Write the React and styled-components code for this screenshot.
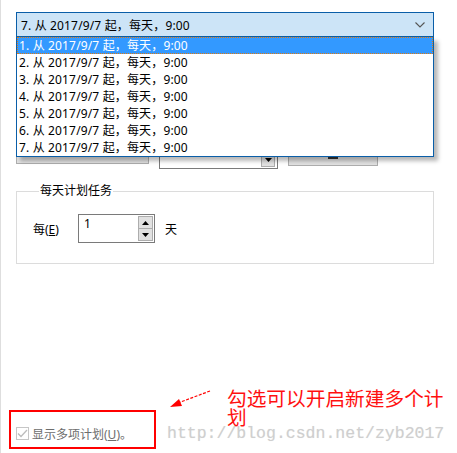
import React from "react";
import styled, { createGlobalStyle } from "styled-components";

const Global = createGlobalStyle`
  html, body { margin: 0; padding: 0; background: #fff; }
  body { font-family: "Noto Sans", "Noto Sans CJK SC", sans-serif; font-size: 12px; color: #000; }
`;

const UI = `"Noto Sans", "Noto Sans CJK SC", sans-serif`;

const Page = styled.div`
  position: relative;
  width: 456px;
  height: 453px;
  border-left: 1px solid #dedede;
  padding-left: 15px;
  box-sizing: border-box;
  display: flex;
  flex-direction: column;
  overflow: hidden;
  font-family: ${UI};
  font-size: 12px;
`;

const ComboWrap = styled.div`
  position: relative;
  margin-top: 12px;
  width: 418px;
  z-index: 5;
`;

const Combo = styled.div`
  height: 25px;
  box-sizing: border-box;
  border: 1px solid #0a5ea8;
  background: #cce4f7;
  display: flex;
  align-items: center;
  justify-content: space-between;
  padding: 0 8px 0 4px;
  color: #000;
  letter-spacing: 0.15px;
`;

const List = styled.ul`
  position: absolute;
  top: 100%;
  left: 0;
  width: 418px;
  margin: 0;
  padding: 0;
  list-style: none;
  box-sizing: border-box;
  border: 1px solid #0a5ea8;
  border-top: none;
  background: #fff;
  box-shadow: 4px 4px 4px rgba(0, 0, 0, 0.28);
`;

const Item = styled.li`
  height: 17px;
  line-height: 17px;
  padding-left: 2px;
  box-sizing: border-box;
  white-space: nowrap;
  letter-spacing: 0.15px;
  background: ${(p) => (p.$active ? "#3399ff" : "#fff")};
  color: ${(p) => (p.$active ? "#fff" : "#000")};
  outline: ${(p) => (p.$active ? "1px dotted #e07a10" : "none")};
  outline-offset: -1px;
`;

const Row = styled.div`
  display: flex;
  align-items: flex-start;
  margin-top: 105px;
`;

const Btn = styled.div`
  box-sizing: border-box;
  width: ${(p) => p.$w}px;
  height: ${(p) => p.$h}px;
  margin-left: ${(p) => p.$ml || 0}px;
  border: 1px solid #adadad;
  background: #e1e1e1;
  display: flex;
  justify-content: center;
  align-items: flex-end;
  padding-bottom: 6px;
`;

const IconBar = styled.span`
  width: 10px;
  height: 2px;
  background: #333;
`;

const Picker = styled.div`
  box-sizing: border-box;
  width: 119px;
  height: 27px;
  margin-left: 10px;
  border: 1px solid #7a7a7a;
  background: #fff;
  display: flex;
  justify-content: flex-end;
  align-items: flex-end;
  padding: 0 2px 1px 0;
`;

const PickBtn = styled.div`
  width: 14px;
  height: 14px;
  box-sizing: border-box;
  border: 1px solid #adadad;
  background: #e1e1e1;
  display: flex;
  align-items: center;
  justify-content: center;
`;

const Group = styled.fieldset`
  margin: 15px 0 0 0;
  width: 418px;
  height: 80px;
  box-sizing: border-box;
  border: 1px solid #dcdcdc;
  padding: 0 0 0 16px;
  min-width: 0;
`;

const Legend = styled.legend`
  padding: 0 1px;
  margin-left: 6px;
  font-size: 12px;
  line-height: 14px;
  color: #000;
`;

const GroupRow = styled.div`
  display: flex;
  align-items: center;
  margin-top: 16px;
`;

const Label = styled.span`
  width: 45px;
`;

const U = styled.span`
  text-decoration: underline;
`;

const Spin = styled.div`
  box-sizing: border-box;
  width: 77px;
  height: 29px;
  border: 1px solid #7a7a7a;
  display: flex;
  justify-content: space-between;
  padding: 1px 1px 1px 5px;
  background: #fff;
`;

const SpinText = styled.span`
  line-height: 16px;
`;

const SpinBtns = styled.div`
  display: flex;
  flex-direction: column;
  width: 15px;
`;

const SpinBtn = styled.div`
  flex: 1;
  box-sizing: border-box;
  border: 1px solid #adadad;
  background: #e1e1e1;
  margin-top: ${(p) => (p.$second ? "-1px" : "0")};
  display: flex;
  align-items: center;
  justify-content: center;
`;

const Unit = styled.span`
  margin-left: 10px;
`;

const Bottom = styled.div`
  margin-top: auto;
  margin-bottom: 13px;
  display: flex;
  align-items: center;
  height: 13px;
  color: #6d6d6d;
`;

const Check = styled.span`
  width: 13px;
  height: 13px;
  box-sizing: border-box;
  border: 1px solid #c6c6c6;
  background: #fff;
  display: inline-flex;
  align-items: center;
  justify-content: center;
  margin-right: 3px;
`;

const RedBox = styled.div`
  position: absolute;
  left: 8px;
  top: 410px;
  width: 147px;
  height: 39px;
  box-sizing: border-box;
  border: 2px solid #ff0000;
`;

const Note = styled.div`
  position: absolute;
  left: 226px;
  top: 389px;
  width: 225px;
  font-family: "Noto Sans CJK SC", sans-serif;
  font-size: 19.7px;
  line-height: 18.5px;
  color: #ff1010;
`;

const Mark = styled.div`
  position: absolute;
  left: 166px;
  top: 427px;
  font-family: "Liberation Mono", monospace;
  font-size: 16.5px;
  line-height: 14px;
  color: #cfcfcf;
  white-space: nowrap;
  text-shadow: 0 0 1px #e8e8e8;
`;

const Arrow = styled.svg`
  position: absolute;
  left: 165px;
  top: 385px;
`;

const items = [1, 2, 3, 4, 5, 6, 7];
const txt = (n) => `${n}. 从 2017/9/7 起，每天，9:00`;

export default function App() {
  return (
    <>
      <Global />
      <Page>
        <ComboWrap>
          <Combo>
            <span>{txt(7)}</span>
            <svg width="10" height="6" viewBox="0 0 10 6">
              <path d="M0.5 0.5 L5 5 L9.5 0.5" fill="none" stroke="#555" strokeWidth="1.1" />
            </svg>
          </Combo>
          <List>
            {items.map((n) => (
              <Item key={n} $active={n === 1}>
                {txt(n)}
              </Item>
            ))}
          </List>
        </ComboWrap>
        <Row>
          <Btn $w={133} $h={22} />
          <Picker>
            <PickBtn>
              <svg width="7" height="4" viewBox="0 0 7 4">
                <path d="M0 0 H7 L3.5 4 Z" fill="#000" />
              </svg>
            </PickBtn>
          </Picker>
          <Btn $w={90} $h={24} $ml={10}>
            <IconBar />
          </Btn>
        </Row>
        <Group>
          <Legend>每天计划任务</Legend>
          <GroupRow>
            <Label>
              每(<U>E</U>)
            </Label>
            <Spin>
              <SpinText>1</SpinText>
              <SpinBtns>
                <SpinBtn>
                  <svg width="7" height="4" viewBox="0 0 7 4">
                    <path d="M0 4 H7 L3.5 0 Z" fill="#000" />
                  </svg>
                </SpinBtn>
                <SpinBtn $second>
                  <svg width="7" height="4" viewBox="0 0 7 4">
                    <path d="M0 0 H7 L3.5 4 Z" fill="#000" />
                  </svg>
                </SpinBtn>
              </SpinBtns>
            </Spin>
            <Unit>天</Unit>
          </GroupRow>
        </Group>
        <Bottom>
          <Check>
            <svg width="11" height="9" viewBox="0 0 11 9">
              <path d="M1 4.5 L4 7.5 L10 1" fill="none" stroke="#bdbdbd" strokeWidth="1.3" />
            </svg>
          </Check>
          <span>
            显示多项计划(<U>U</U>)。
          </span>
        </Bottom>
        <RedBox />
        <Mark>http://blog.csdn.net/zyb2017</Mark>
        <Note>勾选可以开启新建多个计划</Note>
        <Arrow width="50" height="25" viewBox="0 0 50 25">
          <line x1="44" y1="6" x2="12" y2="18" stroke="#ff0000" strokeWidth="1.2" strokeDasharray="3 1.5" />
          <path d="M4 22 L13 14 L16 21 Z" fill="#ff0000" />
        </Arrow>
      </Page>
    </>
  );
}
